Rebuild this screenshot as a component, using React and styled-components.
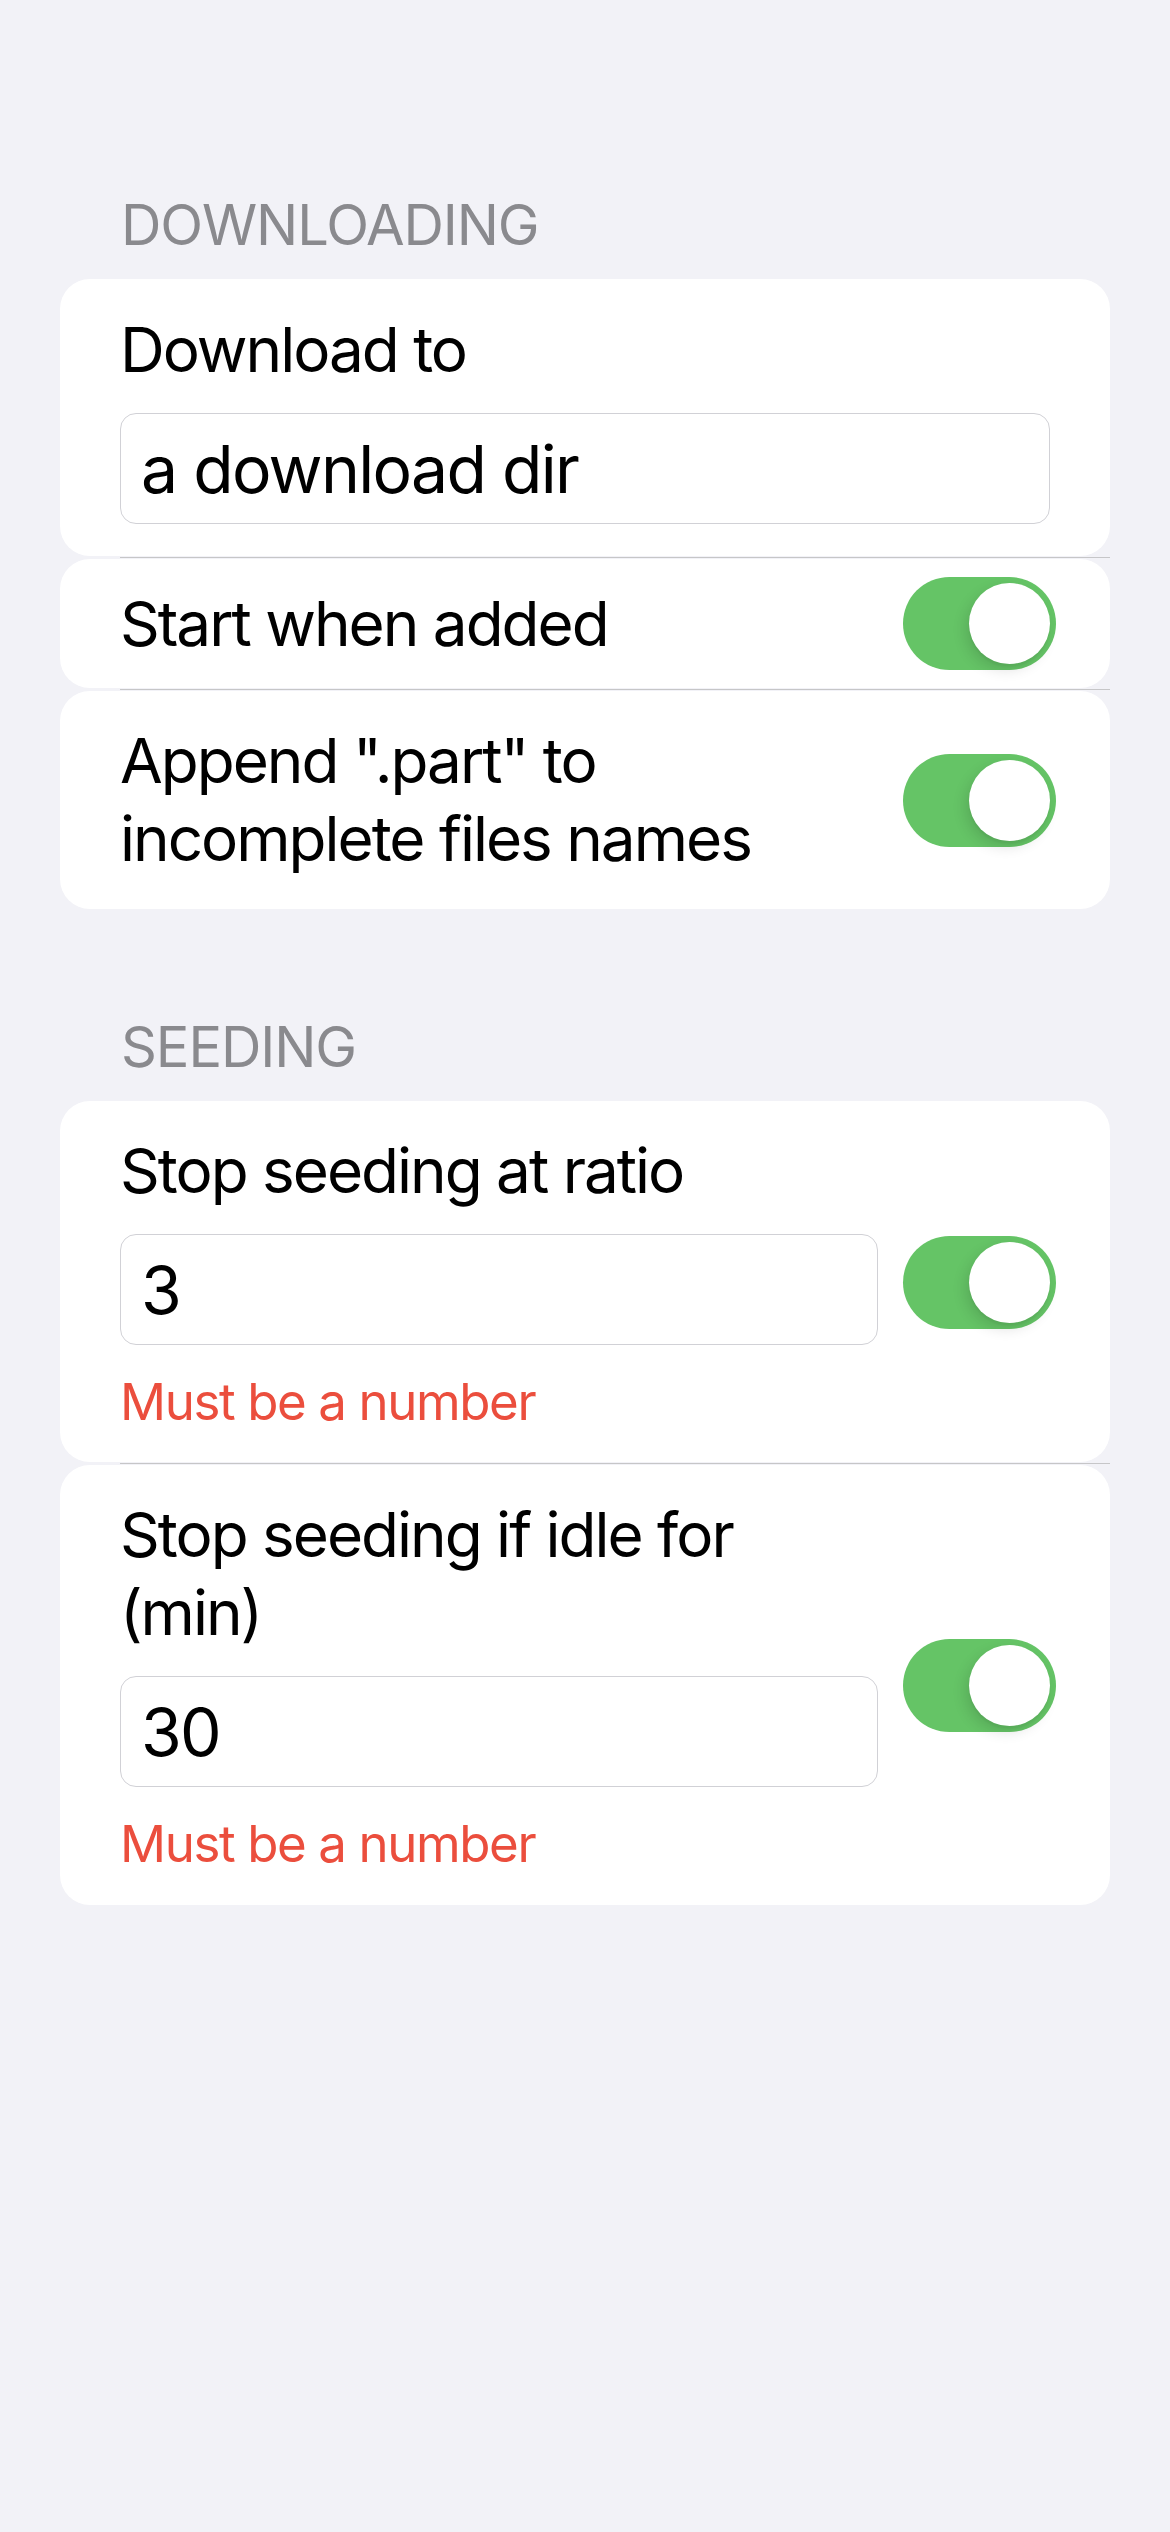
import React from "react";
import styled, { createGlobalStyle } from "styled-components";

const GlobalStyle = createGlobalStyle`
  html, body {
    margin: 0;
    padding: 0;
    background: #f2f2f7;
  }
  body {
    font-family: "Inter", "Noto Sans", sans-serif;
    -webkit-font-smoothing: antialiased;
  }
  * { box-sizing: border-box; }
`;

const Screen = styled.div`
  width: 1170px;
  min-height: 2532px;
  background: #f2f2f7;
  padding: 191px 60px 0 60px;
  display: flex;
  flex-direction: column;
  gap: 104px;
`;

const Section = styled.section`
  display: flex;
  flex-direction: column;
`;

const SectionHeader = styled.h2`
  margin: 0 0 20px 0;
  padding-left: 61px;
  font-family: "Inter", "Noto Sans", sans-serif;
  font-weight: 400;
  font-size: 56px;
  line-height: 68px;
  letter-spacing: -1.1px;
  color: #8a8a8e;
  text-transform: uppercase;
`;

const Card = styled.div`
  background: #ffffff;
  border-radius: 30px;
  padding: ${(p) => p.$padY ?? 31}px 60px ${(p) => p.$padBottom ?? p.$padY ?? 31}px 60px;
  display: flex;
  flex-direction: row;
  align-items: center;
  gap: 25px;
`;

const Column = styled.div`
  flex: 1;
  min-width: 0;
  display: flex;
  flex-direction: column;
`;

const Label = styled.div`
  font-size: 62px;
  line-height: 78px;
  letter-spacing: -2px;
  color: #000000;
`;

const Input = styled.div`
  margin-top: 24px;
  height: 111px;
  border: 1.5px solid #d1d1d6;
  border-radius: 16px;
  padding: 0 20px;
  display: flex;
  align-items: center;
  font-size: 66px;
  letter-spacing: -1.7px;
  color: #000000;
  background: #ffffff;
`;

const ErrorText = styled.div`
  margin-top: 26px;
  font-size: 51px;
  line-height: 62px;
  letter-spacing: -1.4px;
  color: #eb4e3d;
`;

const Separator = styled.div`
  height: 1px;
  margin: 1px 0 1px 60px;
  background: #c6c6c8;
`;

const Track = styled.div`
  flex: none;
  width: 153px;
  height: 93px;
  margin-right: -6px;
  border-radius: 46.5px;
  background: #65c466;
  padding: 6px;
  display: flex;
  justify-content: ${(p) => (p.$on ? "flex-end" : "flex-start")};
  align-items: center;
`;

const Knob = styled.div`
  width: 81px;
  height: 81px;
  border-radius: 50%;
  background: #ffffff;
  box-shadow: -4px 6px 14px rgba(0, 0, 0, 0.12), 0 3px 2px rgba(0, 0, 0, 0.04);
`;

const Toggle = ({ on = true }) => (
  <Track $on={on} role="switch" aria-checked={on}>
    <Knob />
  </Track>
);

export default function App() {
  return (
    <>
      <GlobalStyle />
      <Screen>
        <Section>
          <SectionHeader>Downloading</SectionHeader>
          <Card $padY={32}>
            <Column>
              <Label>Download to</Label>
              <Input>a download dir</Input>
            </Column>
          </Card>
          <Separator />
          <Card $padY={18}>
            <Column>
              <Label>Start when added</Label>
            </Column>
            <Toggle on />
          </Card>
          <Separator />
          <Card>
            <Column>
              <Label>Append ".part" to incomplete files names</Label>
            </Column>
            <Toggle on />
          </Card>
        </Section>

        <Section>
          <SectionHeader>Seeding</SectionHeader>
          <Card $padY={31} $padBottom={29}>
            <Column>
              <Label>Stop seeding at ratio</Label>
              <Input>3</Input>
              <ErrorText>Must be a number</ErrorText>
            </Column>
            <Toggle on />
          </Card>
          <Separator />
          <Card $padY={31} $padBottom={30}>
            <Column>
              <Label>Stop seeding if idle for (min)</Label>
              <Input>30</Input>
              <ErrorText>Must be a number</ErrorText>
            </Column>
            <Toggle on />
          </Card>
        </Section>
      </Screen>
    </>
  );
}
